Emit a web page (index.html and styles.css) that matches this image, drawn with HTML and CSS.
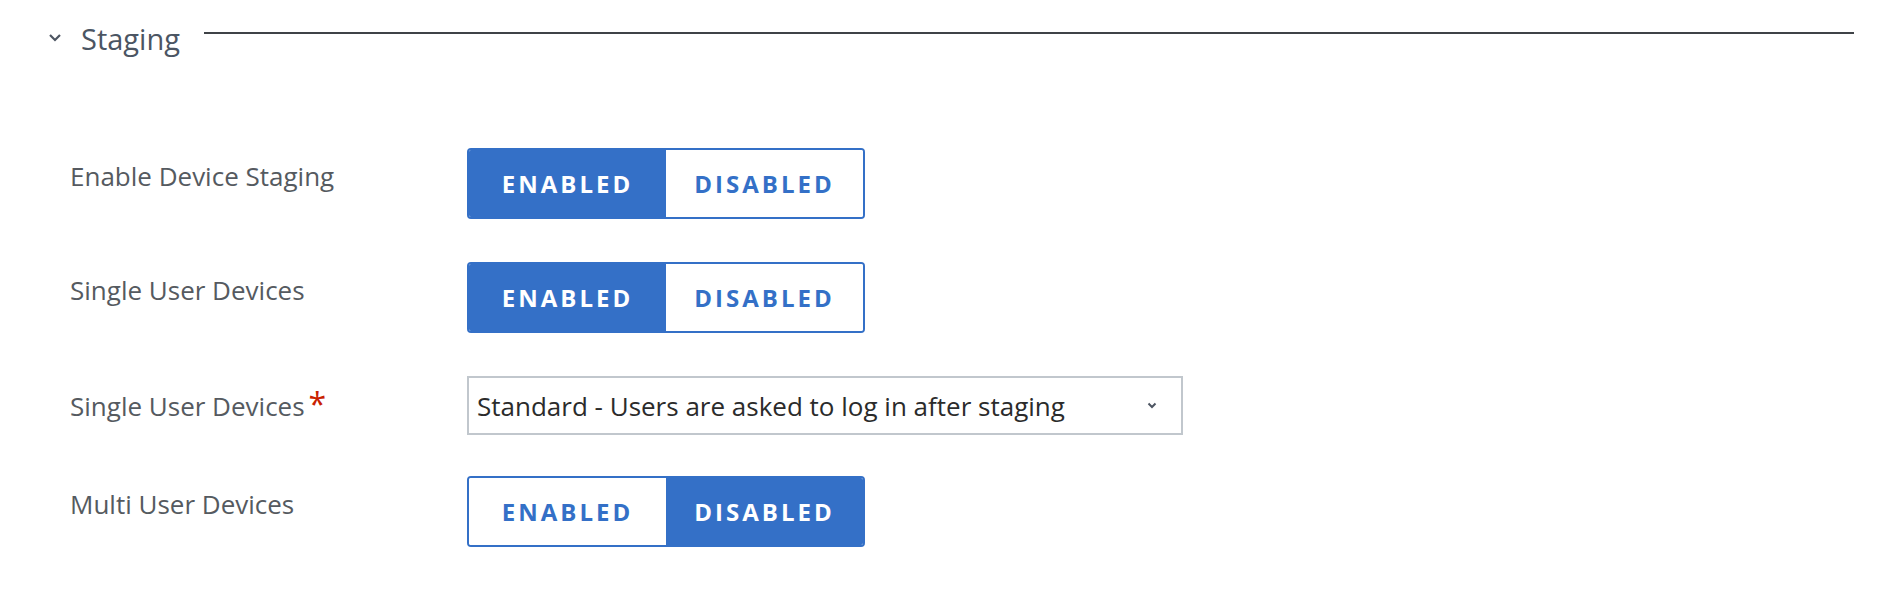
FILE: index.html
```html
<!DOCTYPE html>
<html>
<head>
<meta charset="utf-8">
<link rel="stylesheet" href="styles.css">
</head>
<body>
<div class="page">
  <div class="section-head">
    <svg class="chev" width="14" height="9" viewBox="0 0 14 9"><path d="M2 2 L7 7 L12 2" fill="none" stroke="#4d5562" stroke-width="2.2"/></svg>
    <span class="section-title">Staging</span>
    <span class="rule"></span>
  </div>
  <div class="form">
    <div class="row">
      <div class="label">Enable Device Staging</div>
      <div class="toggle">
        <span class="opt on">ENABLED</span><span class="opt">DISABLED</span>
      </div>
    </div>
    <div class="row">
      <div class="label">Single User Devices</div>
      <div class="toggle">
        <span class="opt on">ENABLED</span><span class="opt">DISABLED</span>
      </div>
    </div>
    <div class="row row-select">
      <div class="label">Single User Devices<span class="req">*</span></div>
      <div class="select">
        <span class="select-text">Standard - Users are asked to log in after staging</span>
        <svg class="select-chev" width="10" height="7" viewBox="0 0 10 7"><path d="M1.5 1.5 L5 5 L8.5 1.5" fill="none" stroke="#4d5562" stroke-width="2"/></svg>
      </div>
    </div>
    <div class="row">
      <div class="label">Multi User Devices</div>
      <div class="toggle">
        <span class="opt">ENABLED</span><span class="opt on">DISABLED</span>
      </div>
    </div>
  </div>
</div>
</body>
</html>
```

FILE: styles.css
```css
html, body {
  margin: 0;
  padding: 0;
  background: #ffffff;
}
.page {
  font-family: "Open Sans", "Noto Sans", sans-serif;
  padding: 16px 32px 0 48px;
}
.section-head {
  display: flex;
  align-items: center;
  height: 34px;
}
.chev {
  display: block;
  margin-top: 9px;
}
.section-title {
  font-size: 29px;
  color: #4b5563;
  margin-left: 19px;
  line-height: 34px;
  margin-top: 12px;
}
.rule {
  flex: 1;
  height: 2px;
  background: #3f4347;
  margin-left: 24px;
}
.form {
  padding-left: 22px;
  padding-top: 98px;
}
.row {
  display: flex;
  align-items: flex-start;
  margin-bottom: 43px;
}
.row-select {
  margin-bottom: 41px;
}
.label {
  width: 397px;
  font-size: 26px;
  color: #555a60;
  line-height: 34px;
  padding-top: 11px;
  flex-shrink: 0;
}
.row-select .label {
  padding-top: 13px;
}
.req {
  color: #c92100;
  font-size: 32px;
  margin-left: 4px;
  vertical-align: top;
  position: relative;
  top: -2px;
}
.toggle {
  display: flex;
  border: 2px solid #3470c7;
  border-radius: 4px;
  overflow: hidden;
  height: 67px;
}
.opt {
  display: flex;
  align-items: center;
  justify-content: center;
  width: 197px;
  font-size: 24px;
  font-weight: 700;
  letter-spacing: 3px;
  color: #3470c7;
  background: #ffffff;
}
.opt.on {
  background: #3470c7;
  color: #ffffff;
}
.select {
  display: flex;
  align-items: center;
  justify-content: space-between;
  width: 680px;
  height: 55px;
  border: 2px solid #c1c7cd;
  padding: 0 24px 0 8px;
}
.select-text {
  font-size: 26px;
  color: #2b2b2b;
}
.select-chev {
  display: block;
}
```
